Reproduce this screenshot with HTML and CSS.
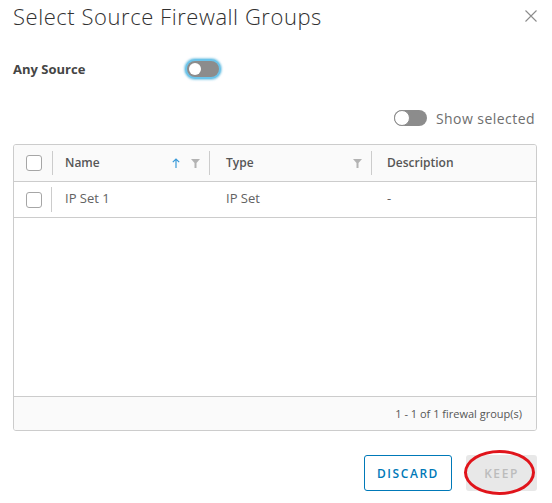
FILE: index.html
```html
<!DOCTYPE html>
<html>
<head>
<meta charset="utf-8">
<link rel="stylesheet" href="styles.css">
</head>
<body>
<div class="modal">
  <div class="title-bar">
    <h1 class="title">Select Source Firewall Groups</h1>
    <button class="close" aria-label="Close">
      <svg width="12" height="12" viewBox="0 0 12 12"><path d="M0.5 0.5 L11.5 11.5 M11.5 0.5 L0.5 11.5" stroke="#8c8c8c" stroke-width="1.1" fill="none"/></svg>
    </button>
  </div>

  <div class="any-row">
    <span class="any-label">Any Source</span>
    <span class="toggle focused"><span class="knob"></span></span>
  </div>

  <div class="show-row">
    <span class="toggle"><span class="knob bordered"></span></span>
    <span class="show-label">Show selected</span>
  </div>

  <div class="grid">
    <div class="grid-head">
      <div class="cell sel"><span class="checkbox"></span><span class="sep"></span></div>
      <div class="cell name">
        <span class="col-title">Name</span>
        <span class="icons">
          <svg class="arrow" width="8" height="10" viewBox="0 0 8 10"><path d="M4 10 V1 M0.8 4.2 L4 1 L7.2 4.2" stroke="#3a9ad9" stroke-width="1.2" fill="none"/></svg>
          <svg class="filter" width="9" height="9" viewBox="0 0 9 9"><path d="M0 0 H9 L5.5 4 V9 H3.5 V4 Z" fill="#b3b3b3"/></svg>
        </span>
        <span class="sep"></span>
      </div>
      <div class="cell type">
        <span class="col-title">Type</span>
        <span class="icons">
          <svg class="filter" width="9" height="9" viewBox="0 0 9 9"><path d="M0 0 H9 L5.5 4 V9 H3.5 V4 Z" fill="#b3b3b3"/></svg>
        </span>
        <span class="sep"></span>
      </div>
      <div class="cell desc"><span class="col-title">Description</span></div>
    </div>

    <div class="grid-row">
      <div class="cell sel"><span class="checkbox"></span><span class="sep row-sep"></span></div>
      <div class="cell name">IP Set 1</div>
      <div class="cell type">IP Set</div>
      <div class="cell desc">-</div>
    </div>

    <div class="grid-body"></div>

    <div class="grid-foot">1 - 1 of 1 firewal group(s)</div>
  </div>

  <div class="actions">
    <button class="btn btn-outline">DISCARD</button>
    <button class="btn btn-disabled">KEEP<span class="annotation"></span></button>
  </div>
</div>
</body>
</html>
```

FILE: styles.css
```css
* { box-sizing: border-box; }
html, body { margin: 0; padding: 0; background: #fff; }
body {
  font-family: "Open Sans", "Lato", sans-serif;
  color: #565656;
  width: 552px;
  height: 503px;
  overflow: hidden;
}
.modal {
  padding: 0 15px 0 13px;
  display: flex;
  flex-direction: column;
}
.title-bar {
  height: 34px;
  display: flex;
  align-items: center;
  justify-content: space-between;
}
.title {
  margin: 0;
  margin-top: -2px;
  font-size: 22px;
  font-weight: 300;
  line-height: 34px;
  color: #313131;
  letter-spacing: 0.55px;
}
.close {
  border: 0;
  background: none;
  padding: 0;
  width: 12px;
  height: 12px;
  display: flex;
  margin-top: -2px;
}
.any-row {
  margin-top: 22px;
  height: 26px;
  display: flex;
  align-items: center;
}
.any-label {
  width: 174px;
  font-size: 13px;
  font-weight: 700;
  color: #454545;
  margin-top: -1px;
}
.toggle {
  position: relative;
  width: 32px;
  height: 16px;
  border-radius: 8px;
  background: #8c8c8c;
  display: inline-flex;
  align-items: center;
  padding-left: 2px;
}
.toggle.focused {
  box-shadow: 0 0 0 2px #6cc4ea, 0 0 2px 3px rgba(73, 175, 217, 0.6);
}
.knob {
  width: 12px;
  height: 12px;
  border-radius: 50%;
  background: #fff;
}
.knob.bordered {
  width: 16px;
  height: 16px;
  margin-left: -2px;
  border: 1px solid #8c8c8c;
}
.show-row {
  margin-top: 26px;
  height: 20px;
  display: flex;
  align-items: center;
  justify-content: flex-end;
  gap: 9px;
}
.show-row .toggle { width: 33px; }
.show-label {
  font-size: 14px;
  color: #6e6e6e;
  margin-right: 2px;
  letter-spacing: 0.45px;
}
.grid {
  margin-top: 16px;
  height: 287px;
  border: 1px solid #ccc;
  border-radius: 3px;
  display: flex;
  flex-direction: column;
  overflow: hidden;
}
.grid-head, .grid-row {
  display: flex;
  border-bottom: 1px solid #ccc;
}
.grid-head {
  height: 37px;
  background: #fafafa;
}
.grid-row {
  height: 36px;
  font-size: 13px;
  color: #626262;
}
.grid-row .cell.name, .grid-row .cell.type, .grid-row .cell.desc { padding-bottom: 3px; }
.cell {
  display: flex;
  align-items: center;
  position: relative;
}
.cell.sel { width: 39px; padding-left: 12px; }
.cell.name { width: 157px; padding-left: 12px; }
.cell.type { width: 162px; padding-left: 16px; }
.cell.desc { flex: 1; padding-left: 15px; }
.col-title {
  font-size: 12px;
  font-weight: 600;
  color: #565656;
  margin-top: -1px;
}
.icons {
  margin-left: auto;
  display: flex;
  align-items: center;
  gap: 11px;
  margin-right: 10px;
}
.cell.type .icons { margin-right: 10px; }
.sep {
  position: absolute;
  right: 0;
  top: 6px;
  width: 1px;
  height: 24px;
  background: #ccc;
}
.row-sep { top: 5px; height: 25px; right: 1px; }
.checkbox {
  width: 16px;
  height: 16px;
  border: 1px solid #a6a6a6;
  border-radius: 3px;
  background: #fff;
}
.grid-body { flex: 1; }
.grid-foot {
  height: 34px;
  border-top: 1px solid #ccc;
  background: #fafafa;
  display: flex;
  align-items: center;
  justify-content: flex-end;
  padding-right: 14px;
  font-size: 11px;
  color: #565656;
}
.actions {
  margin-top: 24px;
  display: flex;
  justify-content: flex-end;
  gap: 14px;
  margin-right: 0;
}
.btn {
  position: relative;
  height: 36px;
  border-radius: 3px;
  font-family: "Open Sans", sans-serif;
  font-size: 12px;
  font-weight: 600;
  letter-spacing: 0.13em;
  padding: 0;
}
.btn-outline {
  width: 88px;
  background: #fff;
  border: 1px solid #0079b8;
  color: #0079b8;
}
.btn-disabled {
  width: 71px;
  background: #e8e8e8;
  border: 0;
  color: #bcbcbc;
}
.annotation {
  position: absolute;
  left: -2px;
  top: -5px;
  width: 71px;
  height: 45px;
  border: 3px solid #e0141b;
  border-radius: 50%;
}
```
